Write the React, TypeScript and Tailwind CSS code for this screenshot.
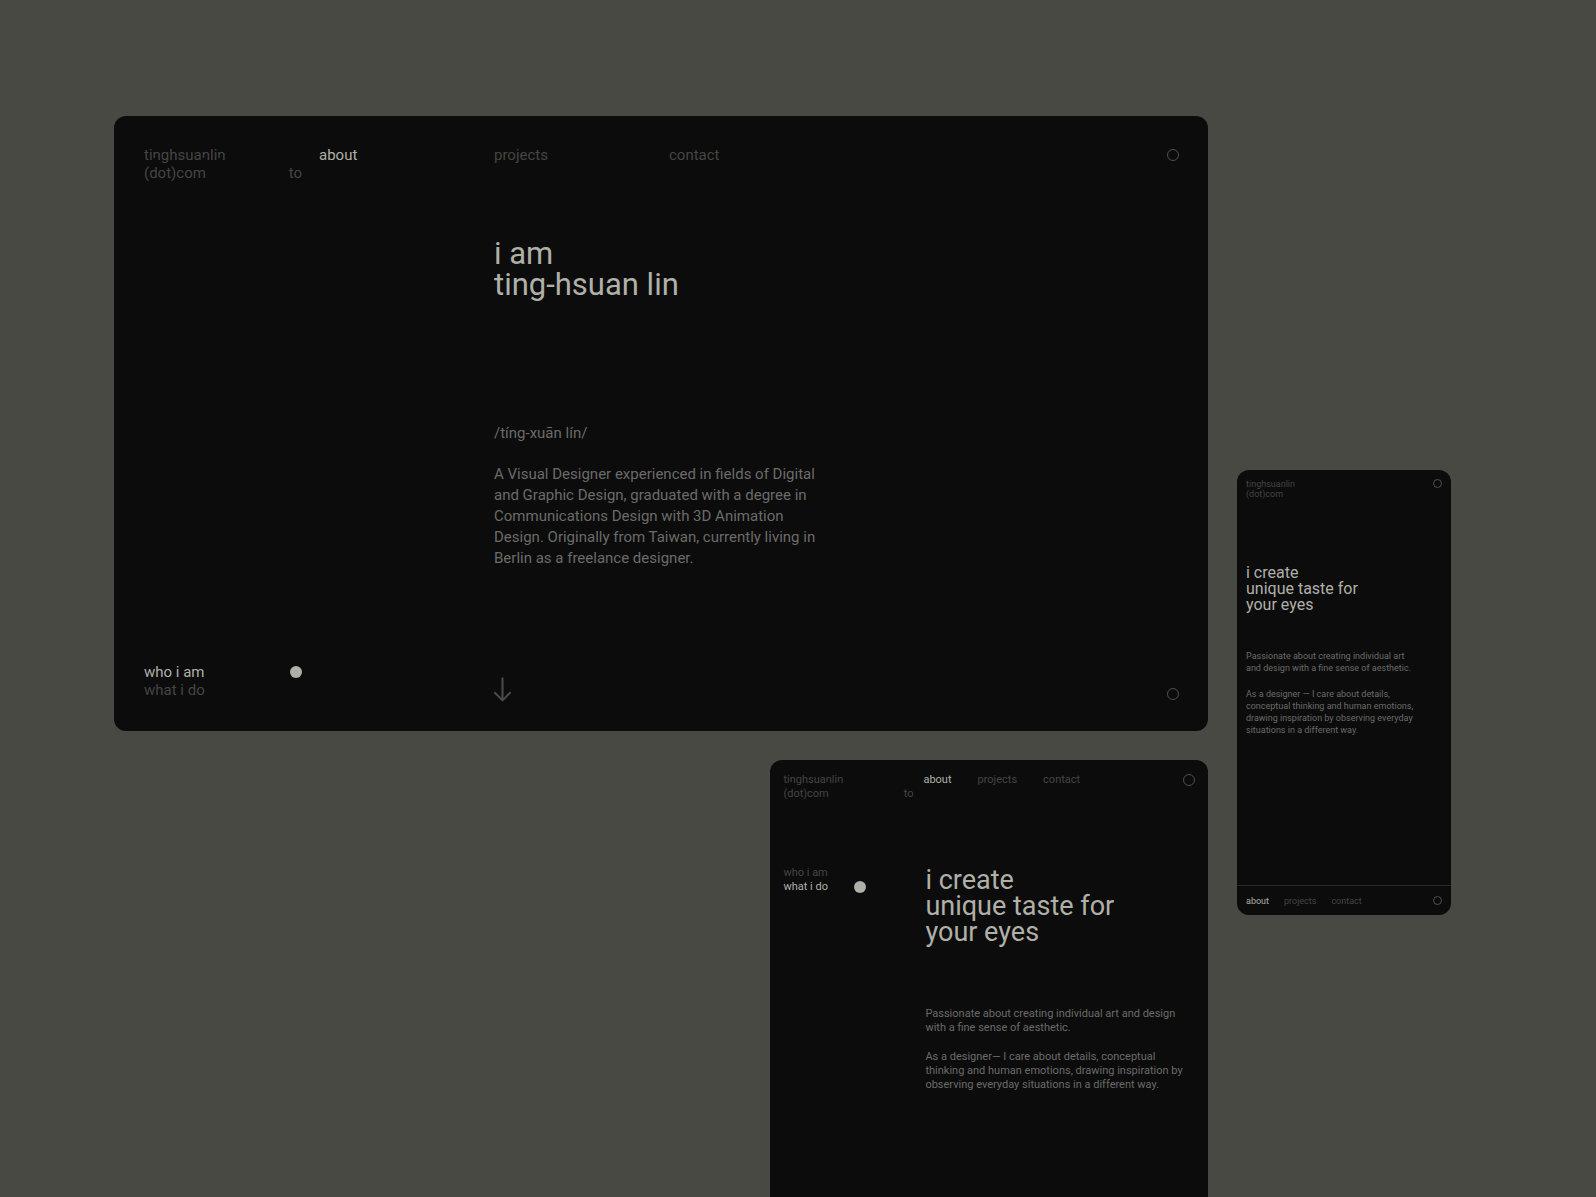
import type { ReactNode } from "react";

const navItems = ["about", "projects", "contact"];

const wide = {
  phonetic: "/tíng-xuān lín/",
  body: [
    "A Visual Designer experienced in fields of Digital",
    "and Graphic Design, graduated with a degree in",
    "Communications Design with 3D Animation",
    "Design. Originally from Taiwan, currently living in",
    "Berlin as a freelance designer.",
  ],
};

// the wordmark's "n" has a shortened left stem
const stemCut = {
  lg: "relative after:absolute after:bottom-0 after:left-0 after:h-[6px] after:w-[3px] after:bg-[#0c0c0c]",
  md: "relative after:absolute after:bottom-0 after:left-0 after:h-[4px] after:w-[2px] after:bg-[#0c0c0c]",
  sm: "",
};

function Lines({ lines }: { lines: string[] }) {
  return (
    <>
      {lines.map((line) => (
        <span key={line} className="block whitespace-nowrap">
          {line}
        </span>
      ))}
    </>
  );
}

function Logo({ size }: { size: "lg" | "md" | "sm" }) {
  const n = <span className={stemCut[size]}>n</span>;

  return (
    <a href="#home" className="text-[#454542]">
      <span className="block">
        ti{n}ghsua{n}li{n}
      </span>
      <span className="block">(dot)com</span>
    </a>
  );
}

function NavLink({ name, active }: { name: string; active?: boolean }) {
  return (
    <a href={`#${name}`} className={active ? "text-[#b0b0a8]" : "text-[#454542]"}>
      {name}
    </a>
  );
}

function Ring({ label, small }: { label: string; small?: boolean }) {
  return (
    <button
      type="button"
      aria-label={label}
      className={
        small
          ? "block size-[9px] rounded-full border border-[#50504c]"
          : "block size-3 rounded-full border border-[#50504c]"
      }
    />
  );
}

function Dot() {
  return <span className="block size-3 rounded-full bg-[#b0b0a8]" />;
}

function Arrow() {
  return (
    <svg viewBox="0 0 18 26" className="h-[25px] w-[17px]" fill="none" stroke="#4a4a46" strokeWidth="2.2" strokeLinecap="round" strokeLinejoin="round">
      <path d="M9 1v23.5M1 16.5l8 8 8-8" />
    </svg>
  );
}

function Frame({ className, children }: { className: string; children: ReactNode }) {
  return <section className={`flex flex-col bg-[#0c0c0c] ${className}`}>{children}</section>;
}

function DesktopFrame() {
  return (
    <Frame className="rounded-xl pt-[30px] pr-[29px] pb-[29px] pl-[30px] text-[15px] leading-[18px]">
      <header className="grid grid-cols-6 gap-x-[15px]">
        <div className="flex items-end justify-between pr-0.5">
          <Logo size="lg" />
          <span className="text-[#454542]">to</span>
        </div>
        {navItems.map((name) => (
          <NavLink key={name} name={name} active={name === "about"} />
        ))}
        <div className="col-span-2 flex justify-end pt-[3px]">
          <Ring label="Toggle theme" />
        </div>
      </header>

      <div className="mt-14 grid grid-cols-6 gap-x-[15px]">
        <div className="col-span-3 col-start-3">
          <h1 className="text-[31px] leading-[31px] text-[#b0b0a8]">
            <Lines lines={["i am", "ting-hsuan lin"]} />
          </h1>
          <div className="mt-[123px] space-y-5 leading-[21px] text-[#6b6b68]">
            <p>{wide.phonetic}</p>
            <p>
              <Lines lines={wide.body} />
            </p>
          </div>
        </div>
      </div>

      <footer className="mt-[94px] grid grid-cols-6 items-end gap-x-[15px]">
        <div className="flex justify-between pr-0.5 pb-[3px]">
          <div className="flex flex-col">
            <a href="#who" className="text-[#b0b0a8]">who i am</a>
            <a href="#what" className="text-[#454542]">what i do</a>
          </div>
          <div className="pt-[3px]">
            <Dot />
          </div>
        </div>
        <a href="#next" aria-label="Scroll down" className="col-start-3">
          <Arrow />
        </a>
        <div className="col-span-3 flex justify-end pb-0.5">
          <Ring label="Back to top" />
        </div>
      </footer>
    </Frame>
  );
}

function TabletFrame() {
  return (
    <Frame className="ml-auto w-2/5 grow rounded-t-xl px-[13px] pt-[13px] text-[11px] leading-[14px]">
      <header className="flex">
        <div className="flex w-[130px] items-end justify-between">
          <Logo size="md" />
          <span className="text-[#454542]">to</span>
        </div>
        <nav className="ml-2.5 flex gap-[26px]">
          {navItems.map((name) => (
            <NavLink key={name} name={name} active={name === "about"} />
          ))}
        </nav>
        <div className="ml-auto pt-px">
          <Ring label="Toggle theme" />
        </div>
      </header>

      <div className="mt-[65px] flex">
        <div className="flex w-[83px] items-end justify-between self-start">
          <div className="flex flex-col">
            <a href="#who" className="text-[#454542]">who i am</a>
            <a href="#what" className="text-[#b0b0a8]">what i do</a>
          </div>
          <div className="pb-px">
            <Dot />
          </div>
        </div>
        <div className="ml-[59px] pt-px">
          <h2 className="text-[27px] leading-[26px] text-[#b0b0a8]">
            <Lines lines={["i create", "unique taste for", "your eyes"]} />
          </h2>
          <div className="mt-[62px] space-y-[15px] text-[#6b6b68]">
            <p>
              <Lines
                lines={["Passionate about creating individual art and design", "with a fine sense of aesthetic."]}
              />
            </p>
            <p>
              <Lines
                lines={[
                  "As a designer— I care about details, conceptual",
                  "thinking and human emotions, drawing inspiration by",
                  "observing everyday situations in a different way.",
                ]}
              />
            </p>
          </div>
        </div>
      </div>
    </Frame>
  );
}

function PhoneFrame() {
  return (
    <Frame className="mt-[354px] min-h-[445px] self-start rounded-xl text-[9px] leading-[10px]">
      <header className="flex justify-between px-[9px] pt-[9px]">
        <Logo size="sm" />
        <Ring label="Toggle theme" small />
      </header>

      <div className="px-[9px] pt-[66px]">
        <h2 className="text-base leading-4 text-[#b0b0a8]">
          <Lines lines={["i create", "unique taste for", "your eyes"]} />
        </h2>
        <div className="mt-[37px] space-y-[14px] leading-3 text-[#6b6b68]">
          <p>
            <Lines lines={["Passionate about creating individual art", "and design with a fine sense of aesthetic."]} />
          </p>
          <p>
            <Lines
              lines={[
                "As a designer — I care about details,",
                "conceptual thinking and human emotions,",
                "drawing inspiration by observing everyday",
                "situations in a different way.",
              ]}
            />
          </p>
        </div>
      </div>

      <footer className="mt-auto flex h-[30px] items-center border-t border-[#292928] px-[9px]">
        <nav className="flex gap-[15px]">
          {navItems.map((name) => (
            <NavLink key={name} name={name} active={name === "about"} />
          ))}
        </nav>
        <div className="ml-auto">
          <Ring label="Back to top" small />
        </div>
      </footer>
    </Frame>
  );
}

export default function App() {
  return (
    <main className="grid min-h-screen grid-cols-[minmax(0,1fr)_214px] gap-x-[29px] bg-[#484943] pt-[116px] pr-[145px] pl-[114px] font-['Roboto',sans-serif]">
      <div className="flex flex-col gap-[29px]">
        <DesktopFrame />
        <TabletFrame />
      </div>
      <PhoneFrame />
    </main>
  );
}
